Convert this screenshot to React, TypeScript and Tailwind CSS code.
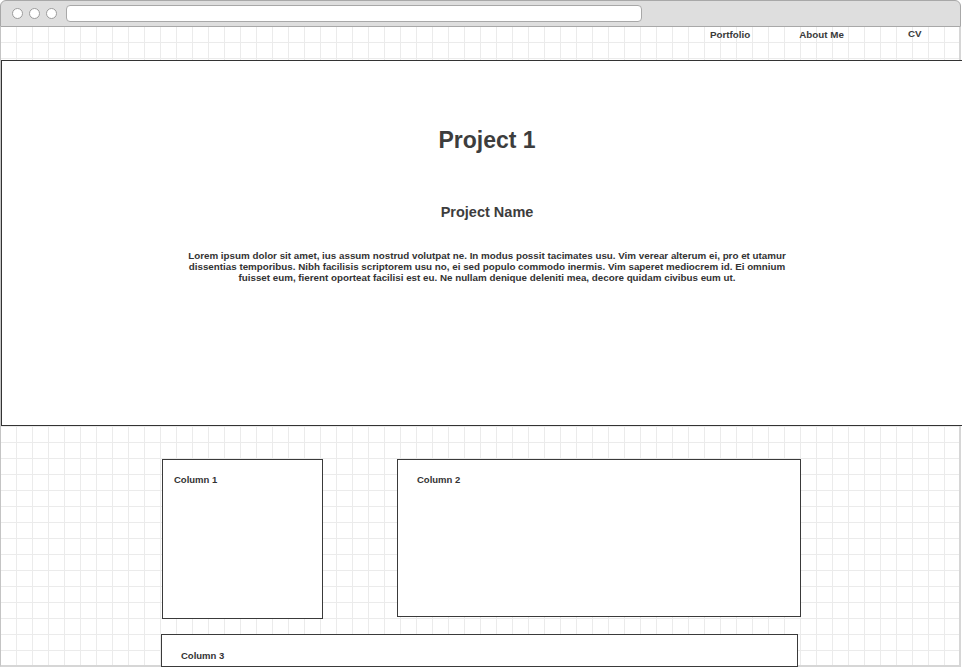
export default function App() {
  const grid =
    "bg-[linear-gradient(to_right,#ebebeb_1px,transparent_1px),linear-gradient(to_bottom,#ebebeb_1px,transparent_1px)] bg-[size:16px_16px]";

  return (
    <div className="w-[962px] h-[670px] bg-white overflow-hidden font-['Liberation_Sans',Arial,sans-serif]">
      {/* browser chrome */}
      <div className="w-[961px] h-[27px] bg-[#dedede] border border-[#a8a8a8] rounded-t-[6px] flex items-center pl-[11px]">
        <div className="flex gap-[6px]">
          <span className="w-[11px] h-[11px] rounded-full bg-white border border-[#9c9c9c]" />
          <span className="w-[11px] h-[11px] rounded-full bg-white border border-[#9c9c9c]" />
          <span className="w-[11px] h-[11px] rounded-full bg-white border border-[#9c9c9c]" />
        </div>
        <div className="ml-[9px] w-[576px] h-[17px] bg-white border border-[#a8a8a8] rounded-[4px]" />
      </div>

      {/* page */}
      <div className={`w-[961px] h-[640px] border-l border-[#c4c4c4] border-r-2 border-r-[#d6d6d6] border-b-2 border-b-[#d6d6d6] ${grid} bg-[position:-1px_-1px] flex flex-col`}>
        <nav className="h-[33px] shrink-0 flex text-[9.8px] leading-[12px] font-bold text-[#3a3a3a] pt-[2px]">
          <span className="ml-[709px]">Portfolio</span>
          <span className="ml-[49px]">About Me</span>
          <span className="ml-[64px] -mt-[1px]">CV</span>
        </nav>

        <section className="h-[366px] shrink-0 -mr-[14px] bg-white border border-[#333] flex flex-col items-center">
          <h1 className="mt-[65px] text-[23px] leading-[28px] font-bold text-[#3d3d3d]">Project 1</h1>
          <h2 className="mt-[49px] text-[14.5px] leading-[18px] font-bold text-[#3d3d3d]">Project Name</h2>
          <p className="mt-[29px] text-[9.8px] leading-[11px] font-bold text-[#333] text-center whitespace-nowrap">
            Lorem ipsum dolor sit amet, ius assum nostrud volutpat ne. In modus possit tacimates usu. Vim verear alterum ei, pro et utamur
            <br />
            dissentias temporibus. Nibh facilisis scriptorem usu no, ei sed populo commodo inermis. Vim saperet mediocrem id. Ei omnium
            <br />
            fuisset eum, fierent oporteat facilisi est eu. Ne nullam denique deleniti mea, decore quidam civibus eum ut.
          </p>
        </section>

        <div className="pl-[160px] pt-[33px] flex flex-col">
          <div className="flex items-start">
            <div className="ml-[1px] w-[161px] h-[160px] shrink-0 bg-white border border-[#3a3a3a] pl-[11px] pt-[14px]">
              <div className="text-[9.5px] leading-[11px] font-bold text-[#333]">Column 1</div>
            </div>
            <div className="ml-[74px] w-[404px] h-[158px] shrink-0 bg-white border border-[#3a3a3a] pl-[19px] pt-[14px]">
              <div className="text-[9.5px] leading-[11px] font-bold text-[#333]">Column 2</div>
            </div>
          </div>
          <div className="mt-[15px] w-[637px] h-[33px] shrink-0 bg-white border border-[#3a3a3a] pl-[19px] pt-[15px]">
            <div className="text-[9.5px] leading-[11px] font-bold text-[#333]">Column 3</div>
          </div>
        </div>
      </div>
    </div>
  );
}
